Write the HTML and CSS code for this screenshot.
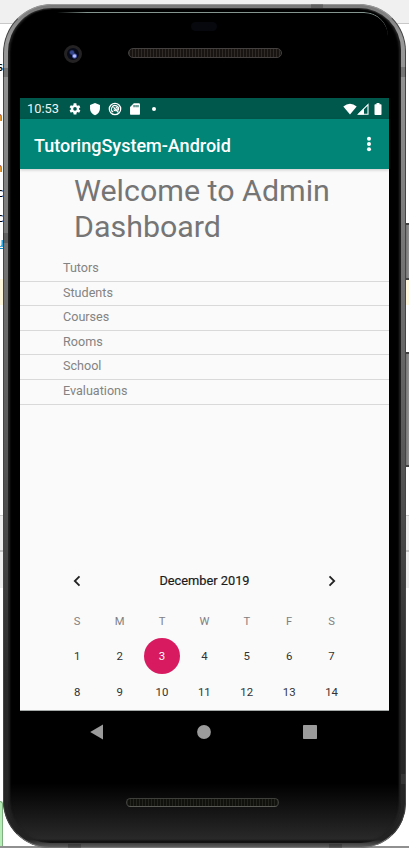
FILE: index.html
```html
<!DOCTYPE html>
<html lang="en">
<head>
<meta charset="utf-8">
<title>TutoringSystem-Android</title>
<link rel="stylesheet" href="styles.css">
</head>
<body>
<div class="desktop">
  <div class="backdrop" aria-hidden="true">
    <div class="toolbar"></div>
    <div class="highlight"></div>
    <div class="panel"></div>
    <div class="footer"></div>
    <div class="green"></div>
    <div class="code"><span>s</span><span class="orange">n</span><span class="orange">n</span><span>c</span><span>c</span><span class="blue">u</span></div>
    <div class="side-button power"></div>
    <div class="side-button volume"></div>
  </div>
  <div class="phone">
    <div class="bezel">
      <header class="phone-top">
        <i class="shine"></i><i class="sensor"></i><i class="camera"></i><i class="speaker"></i>
      </header>
      <main class="screen">
        <div class="status">
          <span class="time">10:53</span>
          <svg class="gear" width="14" height="14" viewBox="1.200 .600 23 23"><path fill="#fff" fill-rule="evenodd" d="M19.400 13c.1-.7.1-1.300 0-2l2.100-1.600-2-3.500-2.500 1c-.5-.4-1.100-.7-1.700-1L15 2.800h-4.500L10 5.900c-.6.3-1.200.6-1.700 1l-2.500-1-2 3.500L5.900 11v2l-2.100 1.600 2 3.500 2.500-1c.5.4 1.100.7 1.700 1l.5 3.100H15l.3-3.100c.6-.3 1.200-.6 1.700-1l2.500 1 2-3.500zM12.700 15a3 3 0 1 1 0-6 3 3 0 0 1 0 6z"/></svg>
          <svg class="shield" width="14" height="14" viewBox="0 0 24 24"><path fill="#fff" d="M12 1.500 3.500 5v6.500c0 5 3.500 9.500 8.500 11 5-1.500 8.500-6 8.500-11V5z"/></svg>
          <svg class="radar" width="14" height="14" viewBox="0 0 24 24" fill="none" stroke="#fff" stroke-width="2.100"><circle cx="12" cy="12" r="9.800"/><path d="M17.500 14.500A6 6 0 1 0 9 17.300M9.500 9l8.500 9"/><path d="M10 12.500a3 3 0 1 0 3-3.500"/></svg>
          <svg class="card" width="14" height="14" viewBox="0 0 24 24"><path fill="#fff" fill-rule="evenodd" d="M10 2h8.500a2 2 0 0 1 2 2v16a2 2 0 0 1-2 2h-13a2 2 0 0 1-2-2V8.500zM9.500 5v4h1.800V5zm3.400 0v4h1.800V5zm3.300 0v4H18V5z"/></svg>
          <i class="dot"></i>
          <svg class="wifi" width="14" height="12" viewBox="0 0 14 12"><path fill="#fff" d="M.3 3.500Q7-1.800 13.700 3.500L7 11.500z"/></svg>
          <svg class="signal" width="12" height="12" viewBox="0 0 12 12"><path fill="none" stroke="#fff" stroke-width="1.100" d="M1.300 11.200H11V1.500z"/><path fill="#fff" d="M1 11.500 7 5.500v6z"/></svg>
          <svg class="battery" width="8" height="12" viewBox="0 0 8 12"><path fill="#fff" d="M2.500 0h3v1.200h1.300q.7 0 .7.700v9.400q0 .7-.7.700H1.200q-.7 0-.7-.7V1.900q0-.7.700-.7h1.300z"/></svg>
        </div>
        <div class="appbar">
          <h1>TutoringSystem-Android</h1>
          <svg width="6" height="16" viewBox="0 0 6 16" fill="#fff"><circle cx="3" cy="2.700" r="2"/><circle cx="3" cy="8" r="2"/><circle cx="3" cy="13.300" r="2"/></svg>
        </div>
        <h2>Welcome to Admin Dashboard</h2>
        <ul class="menu"><li>Tutors</li><li>Students</li><li>Courses</li><li>Rooms</li><li>School</li><li>Evaluations</li></ul>
        <section class="calendar">
          <div class="month">
            <svg width="8" height="12" viewBox="0 0 8 12"><path fill="none" stroke="#222" stroke-width="1.800" d="M6.500 1.300 1.800 6l4.700 4.700"/></svg>
            <span>December 2019</span>
            <svg width="8" height="12" viewBox="0 0 8 12"><path fill="none" stroke="#222" stroke-width="1.800" d="M1.500 1.300 6.200 6l-4.700 4.700"/></svg>
          </div>
          <div class="week names"><span>S</span><span>M</span><span>T</span><span>W</span><span>T</span><span>F</span><span>S</span></div>
          <div class="week"><span>1</span><span>2</span><span class="selected">3</span><span>4</span><span>5</span><span>6</span><span>7</span></div>
          <div class="week"><span>8</span><span>9</span><span>10</span><span>11</span><span>12</span><span>13</span><span>14</span></div>
        </section>
      </main>
      <nav class="keys">
        <svg width="14" height="16" viewBox="0 0 14 16"><path fill="#9b9b9b" d="M13 .5v15L.2 8z"/></svg>
        <svg width="14" height="14" viewBox="0 0 14 14"><circle cx="7" cy="7" r="6.900" fill="#9b9b9b"/></svg>
        <svg width="14" height="14" viewBox="0 0 14 14"><rect width="14" height="14" rx=".7" fill="#9b9b9b"/></svg>
      </nav>
      <i class="speaker bottom"></i>
    </div>
    <i class="antenna left-top"></i><i class="antenna left-mid"></i><i class="antenna right-top"></i><i class="antenna right-bottom"></i><i class="antenna edge-top"></i><i class="antenna edge-left"></i><i class="antenna edge-right"></i>
  </div>
</div>
</body>
</html>
```
FILE: styles.css
```css
* { box-sizing: border-box; }
body { margin: 0; font-family: Roboto, sans-serif; background: #fff; }
i { display: block; }
svg { display: block; flex: none; }
.desktop { position: relative; width: 409px; height: 848px; overflow: hidden; padding: 4px 0 0 3px; }

/* editor window behind the phone */
.backdrop { position: absolute; inset: 0; }
.backdrop > div { position: absolute; left: 0; right: 0; }
.toolbar { top: 0; height: 24px; background: #f0f0f0; border-bottom: 1px solid #c8c8c8; }
.highlight { top: 279px; height: 26px; background: #fff8dc; }
.panel { top: 515px; height: 73px; background: linear-gradient(#ccc 1px, #eee 1px 35px, #c4c4c4 35px 37px, #eee 37px); }
.footer { top: 846px; height: 2px; background: #909090; }
.backdrop > .green { top: 801px; right: auto; width: 3px; height: 45px; background: #b6ecb6; border-top: 1px solid #80b080; border-right: 1px solid #80b080; border-radius: 0 3px 0 0; }
.backdrop > .code { top: 54px; right: auto; width: 12px; font: 13px/25px "DejaVu Sans Mono", monospace; }
.code span { display: block; height: 25px; margin-left: -4px; }
.code span:nth-child(2) { margin-top: 25px; }
.code span:nth-child(3) { margin-top: 26px; }
.code .orange { color: #8a4b08; margin-left: -5px; }
.code .blue { color: #1688bd; text-decoration: underline; }
.backdrop > .side-button { left: 404px; right: -3px; border: 2px solid #444; border-right: 0; background: linear-gradient(90deg, #777, #999 60%); }
.power { top: 223px; height: 57px; }
.volume { top: 352px; height: 115px; }

.phone { position: relative; width: 403px; height: 844px; padding: 4px 5px; border-radius: 49px 47px 45px 47px; overflow: hidden;
  background: linear-gradient(#777, #999 4%, #777 28%, #555 55%, #2b2b2b 80%, #222 99%, #666 100%); }
.phone::before { content: ""; position: absolute; inset: 0; border-radius: inherit; border: 1px solid #444; border-top-color: #999; border-bottom-color: #777; }
.bezel { position: relative; height: 835px; padding: 0 12px; border-radius: 44px 42px 40px 42px; overflow: hidden;
  background: linear-gradient(transparent 775px, #161616 805px, #292929 831px, #050505), #000; box-shadow: inset 2px 0 2px #222, inset -2px 0 2px #222, inset 0 1px 1px #333; }
.phone-top { height: 90px; display: flow-root; }
.shine { position: absolute; top: 4px; left: 49px; right: 13px; height: 24px; border-top: 1.5px solid #849590; border-radius: 0 34px 0 0; -webkit-mask-image: linear-gradient(90deg, transparent, #000 30px); mask-image: linear-gradient(90deg, transparent, #000 30px); }
.sensor { position: absolute; top: 14px; left: 183px; width: 26px; height: 9px; border-radius: 5px; background: #07080d; }
.camera { position: absolute; left: 56px; top: 37px; width: 18px; height: 18px; border-radius: 50%; background: radial-gradient(circle at 7.5px 8px, #b9c2ff 0 1px, #4d5db0 2px, transparent 3px), radial-gradient(circle at 5px 4.500px, #34448c 0 1.500px, transparent 3px), #080b19; border: 3px solid #242222; }
.speaker { position: absolute; top: 40px; left: 120px; width: 154px; height: 10px; border: 1px solid #444140; border-radius: 5px; background: repeating-linear-gradient(90deg, #302b27 0 1px, #171412 1px 3px); }
.speaker.bottom { top: 790px; left: 118px; width: 153px; height: 9px; border-color: #3f3f3b #3f3f3b #5b5b56; background: repeating-linear-gradient(90deg, #24241e 0 1px, #10100d 1px 3px); }

.screen { width: 369px; height: 613px; overflow: hidden; background: #fafafa; display: flex; flex-direction: column; border-bottom: 1px solid #a5aaa8; }
.status { flex: none; height: 21px; background: #00574b; display: flex; align-items: center; padding: 0 7px; }
.time { width: 40.500px; color: #eef4f3; font-size: 12.800px; line-height: 20px; }
.gear { margin-right: 6px; }
.shield { margin-right: 6px; }
.radar { margin-right: 6px; }
.card { margin-right: 10.500px; }
.dot { width: 4px; height: 4px; border-radius: 50%; background: #fff; }
.wifi { margin-left: auto; }
.signal { margin-right: 5px; }
.appbar { flex: none; height: 50px; background: #008577; color: #fff; display: flex; align-items: center; justify-content: space-between; padding: 0 17px 0 14px; box-shadow: 0 1px 3px #0003; }
.appbar h1 { margin: 3px 0 0; font-size: 18px; line-height: 22px; font-weight: 500; }
h2 { flex: none; width: 290px; margin: 4px 0 0 54px; color: #757575; font-weight: 400; font-size: 30.4px; line-height: 36px; }
.menu { flex: none; margin: 12px 0 0; padding: 0; list-style: none; color: #838383; font-size: 12.6px; }
.menu li { height: 24.6px; padding: 0 43px; line-height: 21px; border-bottom: 1px solid #d9d9d9; }
.calendar { margin-top: 157px; padding: 0 36px; }
.month { height: 37px; display: flex; align-items: center; justify-content: space-between; padding: 1px 17px 0; color: #1c1c1c; font-size: 12.8px; -webkit-text-stroke: .2px #1c1c1c; }
.week { display: grid; grid-template-columns: repeat(7, 42.400px); justify-items: center; align-items: center; height: 36px; color: #333; font-size: 11.4px; }
.week span { width: 36px; height: 36px; line-height: 36px; text-align: center; }
.week.names { margin-top: 5px; color: #808080; font-size: 11.2px; }
.names + .week { margin-top: -2px; }
.week .selected { background: #d81b60; color: #fff; border-radius: 50%; }
.keys { height: 42px; display: flex; align-items: center; justify-content: space-between; padding: 0 72px 0 70px; }

.antenna { position: absolute; background: #0003; }
.left-top { left: 0; top: 64px; width: 5px; height: 9px; }
.left-mid { left: 0; top: 229px; width: 5px; height: 10px; }
.right-top { right: 0; top: 63px; width: 6px; height: 10px; }
.right-bottom { right: 0; top: 770px; width: 5px; height: 10px; background: #5555; }
.edge-top { top: 0; left: 308px; width: 12px; height: 4px; }
.edge-left { left: 65px; bottom: 0; width: 13px; height: 4px; }
.edge-right { left: 326px; bottom: 0; width: 13px; height: 4px; }
```
